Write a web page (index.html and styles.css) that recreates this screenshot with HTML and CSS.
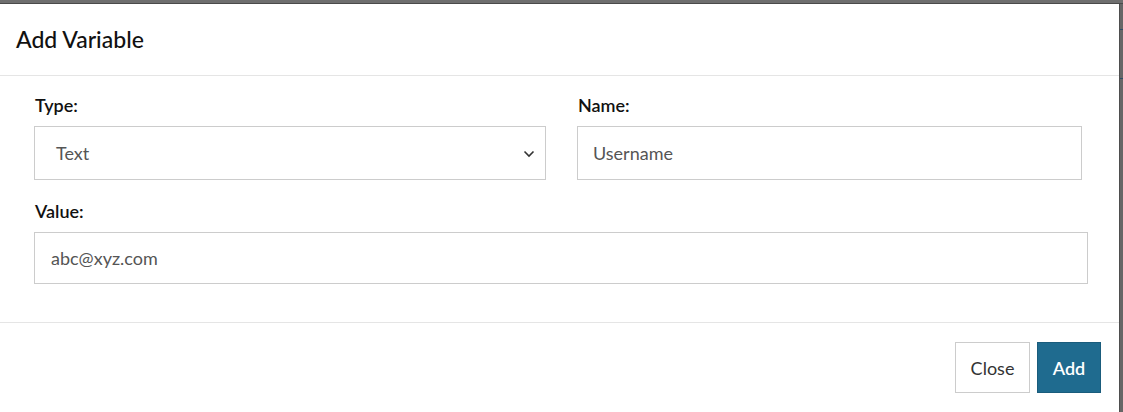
FILE: index.html
```html
<!DOCTYPE html>
<html>
<head>
<meta charset="utf-8">
<link rel="stylesheet" href="styles.css">
</head>
<body>
<div class="topbar"></div>
<div class="stage">
  <div class="modal">
    <div class="modal-header">
      <h1 class="title">Add Variable</h1>
    </div>
    <div class="modal-body">
      <div class="row">
        <div class="field field-type">
          <label class="label">Type:</label>
          <div class="select">
            <span class="select-text">Text</span>
            <svg class="chev" width="12" height="8" viewBox="0 0 12 8"><path d="M1.5 1.5 L6 6 L10.5 1.5" fill="none" stroke="#333" stroke-width="1.6"/></svg>
          </div>
        </div>
        <div class="field field-name">
          <label class="label">Name:</label>
          <div class="input">Username</div>
        </div>
      </div>
      <div class="field field-value">
        <label class="label">Value:</label>
        <div class="input input-value">abc@xyz.com</div>
      </div>
    </div>
    <div class="modal-footer">
      <button class="btn btn-close">Close</button>
      <button class="btn btn-add">Add</button>
    </div>
  </div>
  <div class="edge">
    <span class="tick tick1"></span>
    <span class="tick tick2"></span>
  </div>
</div>
</body>
</html>
```

FILE: styles.css
```css
html, body {
  margin: 0;
  padding: 0;
  height: 412px;
  overflow: hidden;
  background: #666;
  font-family: Lato, "Liberation Sans", sans-serif;
}
.topbar {
  height: 4px;
  background: #6f6f6f;
  border-bottom: 1px solid #4a4a4a;
  box-sizing: border-box;
}
.stage {
  display: flex;
  height: 408px;
}
.modal {
  width: 1119px;
  background: #fff;
  display: flex;
  flex-direction: column;
  border-right: 1px solid #4e4e4e;
}
.modal-header {
  height: 71px;
  border-bottom: 1px solid #e5e5e5;
  padding-left: 16px;
  display: flex;
  align-items: center;
}
.title {
  margin: 0;
  font-size: 23px;
  font-weight: 500;
  color: #111;
  position: relative;
  top: -1px;
}
.modal-body {
  padding: 18px 0 0 34px;
  height: 228px;
  border-bottom: 1px solid #e5e5e5;
}
.row {
  display: flex;
  gap: 31px;
}
.field-type { width: 512px; }
.field-name { width: 505px; }
.field-value { width: 1054px; margin-top: 20px; }
.label {
  display: block;
  font-size: 18px;
  font-weight: 600;
  color: #111;
  margin: 0 0 10px 1px;
  line-height: 22px;
}
.select, .input {
  box-sizing: border-box;
  height: 54px;
  border: 1px solid #ccc;
  display: flex;
  align-items: center;
  font-size: 18px;
  color: #555;
}
.select {
  padding: 0 10px 0 21px;
  justify-content: space-between;
}
.input {
  padding-left: 15px;
}
.input-value {
  height: 52px;
  padding-left: 16px;
}
.chev {
  margin-top: 2px;
}
.modal-footer {
  flex: 1;
  display: flex;
  justify-content: flex-end;
  align-items: flex-start;
  padding: 19px 18px 0 0;
  gap: 7px;
}
.btn {
  font-family: Lato, "Liberation Sans", sans-serif;
  font-size: 18px;
  height: 51px;
  box-sizing: border-box;
  border-radius: 0;
  cursor: pointer;
}
.btn-close {
  width: 75px;
  background: #fff;
  border: 1px solid #ccc;
  color: #333;
}
.btn-add {
  width: 64px;
  background: #1f6b8f;
  border: 1px solid #1a5c7c;
  color: #fff;
  font-weight: 600;
}
.edge {
  flex: 1;
  position: relative;
  background: #666;
}
.tick {
  position: absolute;
  left: 0;
  right: 0;
  height: 1px;
  background: #2d4d66;
}
.tick1 { top: 25px; }
.tick2 { top: 74px; }
```
